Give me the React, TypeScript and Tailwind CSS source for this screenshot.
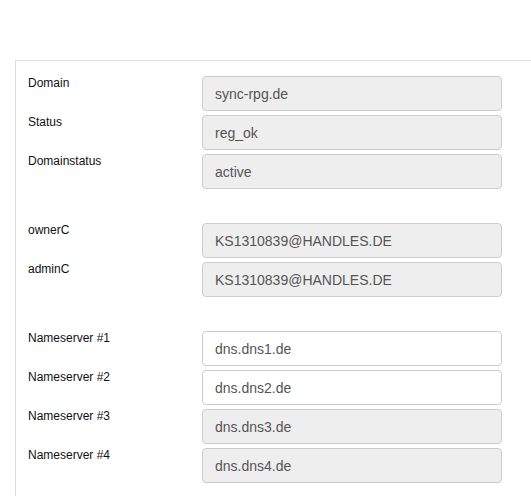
import React from "react";

type Field = { label: string; value: string; editable?: boolean };

const groups: Field[][] = [
  [
    { label: "Domain", value: "sync-rpg.de" },
    { label: "Status", value: "reg_ok" },
    { label: "Domainstatus", value: "active" },
  ],
  [
    { label: "ownerC", value: "KS1310839@HANDLES.DE" },
    { label: "adminC", value: "KS1310839@HANDLES.DE" },
  ],
  [
    { label: "Nameserver #1", value: "dns.dns1.de", editable: true },
    { label: "Nameserver #2", value: "dns.dns2.de", editable: true },
    { label: "Nameserver #3", value: "dns.dns3.de" },
    { label: "Nameserver #4", value: "dns.dns4.de" },
  ],
];

const Row: React.FC<{ field: Field }> = ({ field }) => (
  <div className="flex items-start">
    <label className="w-[174px] shrink-0 text-[12px] leading-[15px] text-[#111]">
      {field.label}
    </label>
    <input
      type="text"
      defaultValue={field.value}
      readOnly={!field.editable}
      className={`w-[300px] h-[35px] rounded-[4px] border border-[#ccc] px-[12px] text-[14px] text-[#555] outline-none ${
        field.editable ? "bg-white" : "bg-[#eee]"
      }`}
    />
  </div>
);

const App: React.FC = () => {
  return (
    <div
      className="min-h-screen bg-white pt-[60px] pl-[15px] overflow-hidden"
      style={{ fontFamily: '"Liberation Sans", Arial, sans-serif' }}
    >
      <div className="border-t border-l border-[#ddd] pl-[12px] pt-[15px] pb-[20px]">
        <div className="flex flex-col gap-[34px]">
          {groups.map((group, i) => (
            <div key={i} className="flex flex-col gap-[4px]">
              {group.map((f) => (
                <Row key={f.label} field={f} />
              ))}
            </div>
          ))}
        </div>
      </div>
    </div>
  );
};

export default App;
